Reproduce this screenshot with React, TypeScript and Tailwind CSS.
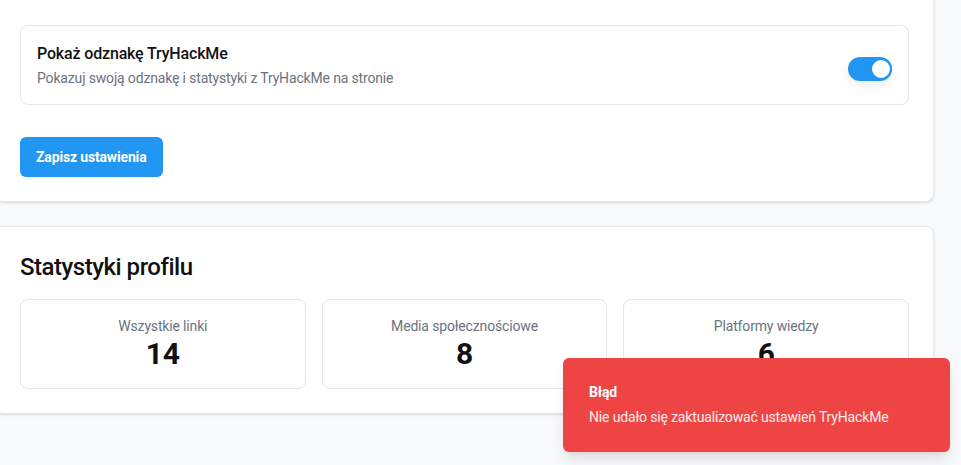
import React from "react";

export default function App() {
  const stats = [
    { label: "Wszystkie linki", value: 14 },
    { label: "Media społecznościowe", value: 8 },
    { label: "Platformy wiedzy", value: 6 },
  ];
  return (
    <div
      className="relative w-[961px] h-[465px] overflow-hidden bg-[#f8f9fa] text-[#111] tracking-[-0.01em]"
      style={{ fontFamily: 'Roboto, "Open Sans", sans-serif' }}
    >
      <div className="-mt-[20px] -ml-[5px] w-[939px] flex flex-col gap-6">
        <div className="bg-white border border-[#e5e7eb] rounded-lg shadow-sm px-6 pt-[44px] pb-6">
          <div className="border border-[#e5e7eb] rounded-lg p-4 flex items-center justify-between">
            <div className="flex flex-col">
              <div className="text-base font-medium leading-6 text-[#111]">Pokaż odznakę TryHackMe</div>
              <div className="mt-0.5 text-sm leading-5 text-[#6b7280]">Pokazuj swoją odznakę i statystyki z TryHackMe na stronie</div>
            </div>
            <div className="mt-2 w-11 h-6 rounded-full bg-[#2196f3] flex items-center justify-end shadow-[0_4px_10px_rgba(0,0,0,0.08)]">
              <div className="w-[22px] h-[22px] rounded-full bg-white border-2 border-[#2196f3]" />
            </div>
          </div>
          <button className="mt-8 h-10 px-4 rounded-md bg-[#2196f3] text-white text-sm font-bold">
            Zapisz ustawienia
          </button>
        </div>
        <div className="bg-white border border-[#e5e7eb] rounded-lg shadow-sm p-6">
          <h2 className="text-2xl leading-8 font-medium tracking-[-0.02em] text-[#111] mb-4">Statystyki profilu</h2>
          <div className="grid grid-cols-3 gap-4">
            {stats.map((s) => (
              <div key={s.label} className="border border-[#e5e7eb] rounded-lg p-4 flex flex-col items-center">
                <div className="text-sm leading-5 text-[#6b7280]">{s.label}</div>
                <div className="text-3xl leading-9 font-bold text-[#111]">{s.value}</div>
              </div>
            ))}
          </div>
        </div>
      </div>
      <div className="absolute right-[11px] bottom-[13px] w-[387px] h-[94px] rounded-md bg-[#ef4444] shadow-lg px-[26px] pt-6 text-white">
        <div className="text-sm leading-5 font-bold">Błąd</div>
        <div className="mt-[5px] text-sm leading-5 text-white/90">Nie udało się zaktualizować ustawień TryHackMe</div>
      </div>
    </div>
  );
}
